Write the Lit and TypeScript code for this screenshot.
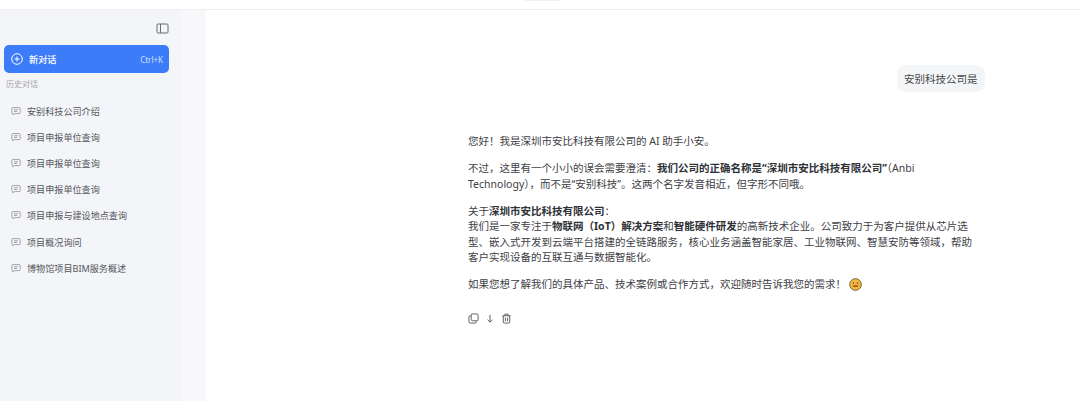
import { LitElement, html, css, svg } from "lit";
import { customElement } from "lit/decorators.js";

const chatIcon = svg`<svg class="ci" viewBox="0 0 10 10" width="10" height="10" fill="none" stroke="#8b8e94" stroke-width="0.8"><path d="M1.800 1.600h6.400a1 1 0 0 1 1 1v4a1 1 0 0 1-1 1H3.400L1.800 8.900V7.600a1 1 0 0 1-1-1v-4a1 1 0 0 1 1-1z"/><path d="M3 3.800h4M3 5.500h3"/></svg>`;

const items = ["安别科技公司介绍", "项目申报单位查询", "项目申报单位查询", "项目申报单位查询", "项目申报与建设地点查询", "项目概况询问", "博物馆项目BIM服务概述"];

@customElement("app-root")
export class AppRoot extends LitElement {
  static styles = css`
    :host { display: block; width: 1080px; height: 401px; overflow: hidden; background: #fff; font-family: "Noto Sans", "Noto Sans CJK SC", sans-serif; color: #33363b; }
    .top { height: 9px; border-bottom: 1px solid #eeeeef; display: flex; justify-content: center; }
    .tab { width: 36px; height: 1px; margin-left: 3px; background: #f2f2f3; }
    .body { display: flex; height: 391px; }
    .side { width: 181px; background: #f4f5f8; box-sizing: border-box; padding: 12px 12px 0 4px; display: flex; flex-direction: column; }
    .gutter { width: 25px; background: #f8f8fa; }
    .toggle { display: flex; justify-content: flex-end; height: 16px; }
    .new { margin-top: 7px; height: 28px; background: #3c7cf9; border-radius: 5px; color: #fff; display: flex; align-items: center; padding: 0 6px 0 7px; gap: 6px; font-size: 9px; }
    .new strong { font-weight: 500; flex: 1; font-size: 9.200px; color: #fff; }
    .new span { font-size: 8px; opacity: .75; }
    .hist { font-size: 8px; color: #a4a6ab; margin: 5px 0 0 2px; line-height: 12px; }
    ul { list-style: none; margin: 7.500px 0 0; padding: 0; }
    li { height: 26.200px; display: flex; align-items: center; gap: 6px; padding-left: 7px; font-size: 9.100px; color: #53565c; }
    .main { flex: 1; display: flex; flex-direction: column; padding: 55px 95px 0 262px; box-sizing: border-box; }
    .user { align-self: flex-end; height: 27px; padding: 0 7.500px; display: flex; align-items: center; background: #f4f5f7; border-radius: 9px; font-size: 10.500px; color: #44474c; }
    .ans { margin-top: 42px; width: 507px; font-size: 10.500px; line-height: 15.500px; color: #3d4045; }
    p { margin: 0 0 11.500px; }
    b { font-weight: 700; color: #2e3136; }
    .emo { display: inline-block; vertical-align: -3px; }
    .acts { display: flex; gap: 6px; margin-top: 20px; align-items: center; }
  `;
  render() {
    return html`
      <div class="top"><div class="tab"></div></div>
      <div class="body">
        <aside class="side">
          <div class="toggle">
            <svg width="13" height="13" viewBox="0 0 13 13" fill="none" stroke="#6a6d73" stroke-width="1"><rect x="1" y="2" width="11" height="9" rx="1"/><path d="M4.500 2v9"/></svg>
          </div>
          <div class="new">
            <svg width="12" height="12" viewBox="0 0 12 12" fill="none" stroke="#fff" stroke-width="1"><circle cx="6" cy="6" r="5.300"/><path d="M6 3.500v5M3.500 6h5"/></svg>
            <strong>新对话</strong><span>Ctrl+K</span>
          </div>
          <div class="hist">历史对话</div>
          <ul>${items.map((t) => html`<li>${chatIcon}<span>${t}</span></li>`)}</ul>
        </aside>
        <div class="gutter"></div>
        <main class="main">
          <div class="user">安别科技公司是</div>
          <div class="ans">
            <p>您好！我是深圳市安比科技有限公司的 AI 助手小安。</p>
            <p>不过，这里有一个小小的误会需要澄清：<b>我们公司的正确名称是“深圳市安比科技有限公司”</b>（Anbi Technology），而不是“安别科技”。这两个名字发音相近，但字形不同哦。</p>
            <p>关于<b>深圳市安比科技有限公司</b>：<br>我们是一家专注于<b>物联网（IoT）解决方案</b>和<b>智能硬件研发</b>的高新技术企业。公司致力于为客户提供从芯片选型、嵌入式开发到云端平台搭建的全链路服务，核心业务涵盖智能家居、工业物联网、智慧安防等领域，帮助客户实现设备的互联互通与数据智能化。</p>
            <p>如果您想了解我们的具体产品、技术案例或合作方式，欢迎随时告诉我您的需求！
              <svg class="emo" width="13" height="13" viewBox="0 0 13 13"><circle cx="6.500" cy="6.500" r="5.800" fill="#f5b942" stroke="#6b5520" stroke-width=".9"/><circle cx="4.500" cy="5" r=".8" fill="#5c4a20"/><circle cx="8.500" cy="5" r=".8" fill="#5c4a20"/><path d="M3.300 7.300c1 2.600 5.400 2.600 6.400 0z" fill="#a8551f"/></svg>
            </p>
            <div class="acts">
              <svg width="11" height="11" viewBox="0 0 12 12" fill="none" stroke="#555" stroke-width="1"><rect x="3.500" y="1" width="7.500" height="7.500" rx="1.500"/><path d="M3.500 3H2.500A1.500 1.500 0 0 0 1 4.500v5A1.500 1.500 0 0 0 2.500 11h5A1.500 1.500 0 0 0 9 9.500V8.500"/></svg>
              <svg width="10" height="11" viewBox="0 0 11 12" fill="none" stroke="#555" stroke-width="1"><path d="M5.500 2v8M2.800 7.300l2.700 2.700 2.700-2.700"/></svg>
              <svg width="11" height="11" viewBox="0 0 12 12" fill="none" stroke="#555" stroke-width="1"><path d="M1.500 3h9M4.200 3V1.300h3.600V3M2.500 3v7a1 1 0 0 0 1 1h5a1 1 0 0 0 1-1V3M4.800 5v4M7.200 5v4"/></svg>
            </div>
          </div>
        </main>
      </div>`;
  }
}
